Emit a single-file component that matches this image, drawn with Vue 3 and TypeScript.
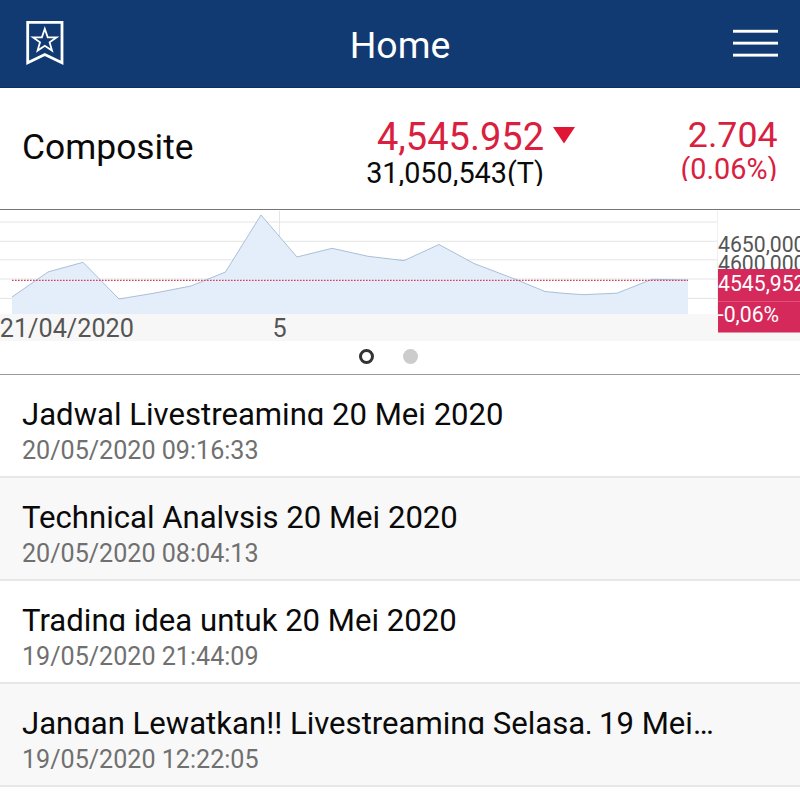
<script setup lang="ts">
interface NewsItem {
  title: string
  time: string
}

const news: NewsItem[] = [
  { title: 'Jadwal Livestreaming 20 Mei 2020', time: '20/05/2020 09:16:33' },
  { title: 'Technical Analysis 20 Mei 2020', time: '20/05/2020 08:04:13' },
  { title: 'Trading idea untuk 20 Mei 2020', time: '19/05/2020 21:44:09' },
  { title: 'Jangan Lewatkan!! Livestreaming Selasa, 19 Mei…', time: '19/05/2020 12:22:05' },
]

const points: [number, number][] = [
  [12, 87], [48, 62], [83, 52.3], [119, 89], [155, 83], [191, 76], [225.5, 62],
  [261, 5], [297, 47], [332, 38.3], [368, 46.3], [404, 50.6], [439, 34.5],
  [474, 53.5], [516, 69.5], [545, 81.5], [560, 83], [583, 84.7], [617, 83.2], [652, 69.3], [688, 70],
]
const line = points.map((p) => p.join(',')).join(' ')
const area = `12,104 ${line} 688,104`
const gridRows: number[] = [12, 31.3, 49.8, 69, 88.4]
</script>

<template>
  <main class="screen">
    <header class="bar">
      <svg class="bookmark" width="40" height="48" viewBox="0 0 40 48" fill="none" stroke="#fff">
        <path d="M2.7 3.4H37V43.8L19.8 35.6L2.7 43.8Z" stroke-width="2.8" />
        <path d="M19.8 9.8L22.7 18.3H31.6L24.6 23.3L27 31.6L19.8 26.8L12.6 31.6L15 23.3L8 18.3H16.9Z" stroke-width="1.8" />
      </svg>
      <h1>Home</h1>
      <svg class="menu" width="46" height="30" viewBox="0 0 46 30" fill="#fff">
        <rect x="1" y="1.8" width="45" height="2.9" />
        <rect x="1" y="13.7" width="45" height="2.9" />
        <rect x="1" y="25.7" width="45" height="2.9" />
      </svg>
    </header>

    <section class="quote">
      <div class="name">Composite</div>
      <div class="price">
        <div class="last">4,545.952</div>
        <div class="volume">31,050,543(T)</div>
      </div>
      <svg class="down" width="22" height="17" viewBox="0 0 22 17"><path d="M0 0H22L11 16.5Z" fill="#df1735" /></svg>
      <div class="change">
        <div class="points">2.704</div>
        <div class="percent">(0.06%)</div>
      </div>
    </section>

    <section class="chart">
      <svg width="800" height="131" viewBox="0 0 800 131">
        <rect y="104" width="800" height="27" fill="#f7f7f7" />
        <g stroke="#e4e4e4" stroke-width="1">
          <line v-for="y in gridRows" :key="y" x1="0" x2="717" :y1="y" :y2="y" />
          <line x1="279.5" x2="279.5" y1="1" y2="104" />
          <line x1="717.5" x2="717.5" y1="1" y2="104" stroke="#efefef" />
        </g>
        <polygon :points="area" fill="#e4eefb" />
        <polyline :points="line" fill="none" stroke="#a9bfd8" stroke-width="1" />
        <line x1="12" x2="688" y1="70.4" y2="70.4" stroke="#d6405c" stroke-width="1.2" stroke-dasharray="1.6 1.4" />
        <g class="dates">
          <text x="-0.2" y="126.8">21/04/2020</text>
          <text x="279.5" y="126.8" text-anchor="middle">5</text>
        </g>
        <g class="scale">
          <text x="718" y="41.8">4650,000</text>
          <text x="718" y="61">4600,000</text>
          <rect x="718" y="59" width="82" height="63.5" fill="#d4295a" />
          <line x1="718" x2="800" y1="91.5" y2="91.5" stroke="#df5079" />
          <text class="tag" x="718" y="80.8">4545,952</text>
          <text class="tag" x="717.8" y="111.8">-0,06%</text>
        </g>
      </svg>
      <div class="pager">
        <span class="dot current"></span>
        <span class="dot"></span>
      </div>
    </section>

    <ul class="news">
      <li v-for="item in news" :key="item.title">
        <div class="title">{{ item.title }}</div>
        <div class="time">{{ item.time }}</div>
      </li>
    </ul>
  </main>
</template>

<style>
body {
  margin: 0;
  overflow: hidden;
}
</style>

<style scoped>
.screen {
  width: 800px;
  height: 800px;
  overflow: hidden;
  background: #fff;
  color: #0a0a0a;
  font-family: Roboto, "Liberation Sans", sans-serif;
}
.screen * {
  box-sizing: border-box;
}
.bar {
  display: grid;
  grid-template-columns: 1fr auto 1fr;
  align-items: center;
  height: 87.5px;
  padding: 0 22px 0 25px;
  background: #113a72;
  border-bottom: 1px solid #0c2f63;
}
h1 {
  margin: 0;
  padding: 4px 3px 0 0;
  color: #fff;
  font-size: 37.4px;
  font-weight: 400;
  line-height: 46px;
}
.menu {
  justify-self: end;
}
.quote {
  display: grid;
  grid-template-columns: 320px 201px 1fr auto;
  align-items: start;
  height: 121.5px;
  padding: 27px 22.5px 0 22px;
}
.name {
  font-size: 35.4px;
  line-height: 42px;
  padding-top: 11px;
}
.price,
.change {
  text-align: right;
}
.price {
  padding-left: 1px;
  margin-right: -1px;
}
.last,
.points,
.percent {
  color: #d9203f;
}
.last {
  font-size: 38px;
  line-height: 44px;
}
.volume {
  height: 27px;
  overflow: hidden;
  font-size: 28.8px;
  line-height: 28px;
}
.down {
  margin: 12px 0 0 10px;
}
.points {
  font-size: 35.7px;
  line-height: 41px;
}
.percent {
  height: 25px;
  overflow: hidden;
  font-size: 28.8px;
  line-height: 26px;
}
.chart {
  height: 166px;
  border-top: 1px solid #757575;
  border-bottom: 1px solid #999;
}
.chart svg {
  display: block;
}
.dates text {
  font-size: 25.2px;
  fill: #555;
}
.scale text {
  font-size: 21.2px;
  fill: #555;
}
.scale .tag {
  fill: #fff;
}
.pager {
  display: flex;
  justify-content: center;
  gap: 29px;
  padding: 8px 23px 0 0;
}
.dot {
  width: 15px;
  height: 15px;
  border-radius: 50%;
  background: #ccc;
}
.current {
  border: 3px solid #333;
  background: #fff;
}
.news {
  margin: 0;
  padding: 0;
  list-style: none;
}
.news li {
  height: 103px;
  padding: 23px 22px 0;
  border-bottom: 2px solid #e7e7e7;
}
.news li:nth-child(even) {
  background: #f8f8f8;
}
.title {
  height: 27px;
  overflow: hidden;
  white-space: nowrap;
  font-size: 31.12px;
  line-height: 34px;
}
.time {
  padding-top: 11px;
  color: #707070;
  font-size: 25.1px;
  line-height: 30px;
}
</style>
